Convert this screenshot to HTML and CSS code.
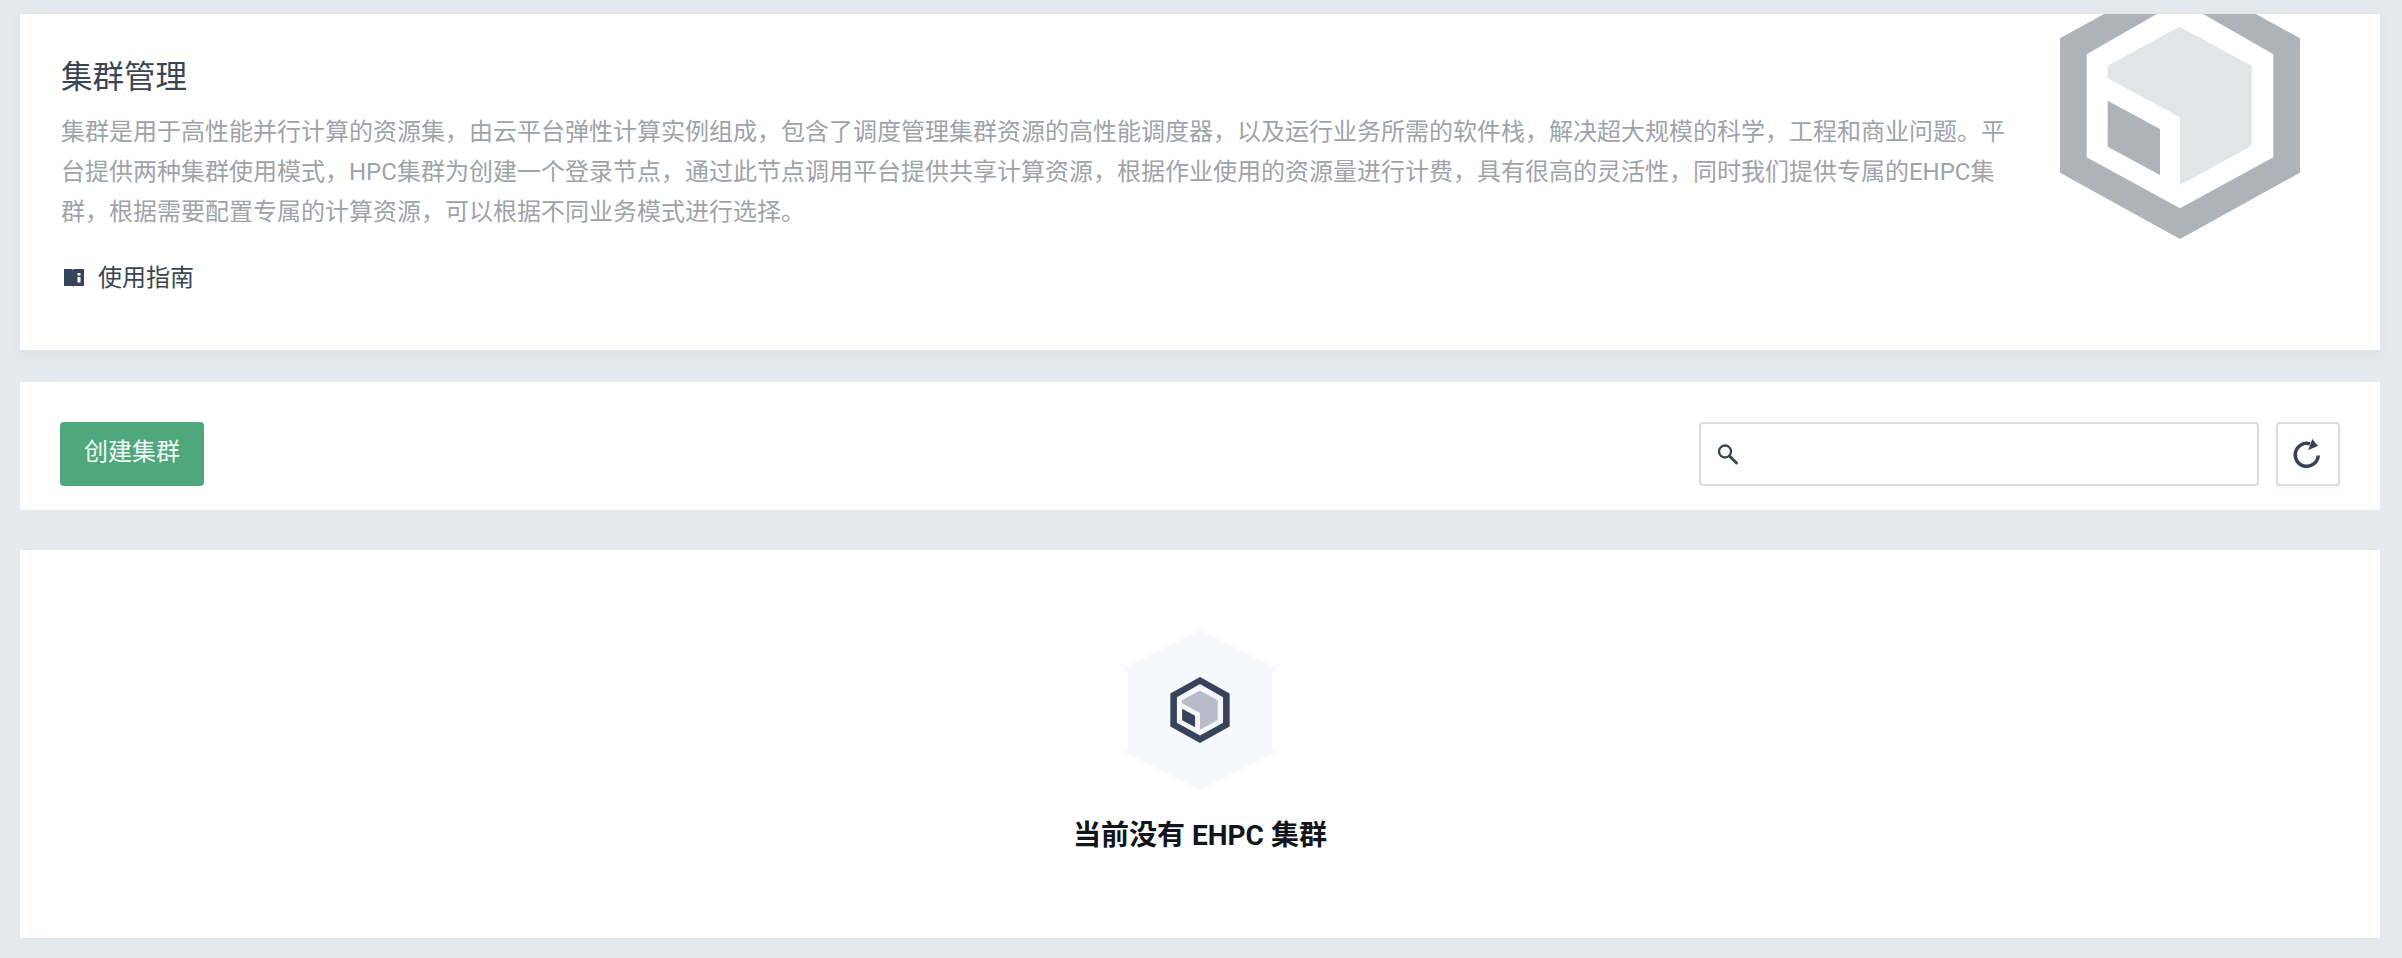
FILE: index.html
```html
<!DOCTYPE html>
<html lang="zh-CN">
<head>
<meta charset="utf-8">
<title>集群管理</title>
<link rel="stylesheet" href="styles.css">
</head>
<body>
<svg class="defs" width="0" height="0" aria-hidden="true">
  <symbol id="cube" viewBox="240 -84 720 801">
    <path class="hex" fill-rule="evenodd" d="M600 -84 960 115V518L600 717 240 518V115ZM600 2 320 163V472L600 625 880 472V163Z"/>
    <path class="top" d="M598 80 815 197V437L600 555V352L383 235V197Z"/>
    <path class="hex" d="M383 302 540 387V525L383 440Z"/>
  </symbol>
</svg>
<main class="page">
  <section class="card intro">
    <div class="intro-text">
      <h1 class="title">集群管理</h1>
      <p class="desc">集群是用于高性能并行计算的资源集，由云平台弹性计算实例组成，包含了调度管理集群资源的高性能调度器，以及运行业务所需的软件栈，解决超大规模的科学，工程和商业问题。平台提供两种集群使用模式，HPC集群为创建一个登录节点，通过此节点调用平台提供共享计算资源，根据作业使用的资源量进行计费，具有很高的灵活性，同时我们提供专属的EHPC集群，根据需要配置专属的计算资源，可以根据不同业务模式进行选择。</p>
      <a class="guide">
        <svg class="book" viewBox="0 0 20 18"><path d="M0 0 H8 L9 1 L10 0 H20 V17 H10 L9.500 18 L9 17 H0Z"/><path class="book-i" d="M13.500 4h3v2.500h-3zM13.500 8h3v5.500h-3z"/></svg>
        <span>使用指南</span>
      </a>
    </div>
    <svg class="logo-big"><use href="#cube"/></svg>
  </section>
  <section class="card toolbar">
    <button class="create">创建集群</button>
    <div class="tools">
      <label class="search">
        <svg class="search-icon" viewBox="0 0 24 24"><circle cx="9" cy="9.500" r="6" /><path d="M13.500 14 20.500 21"/></svg>
        <input class="search-input" type="text" aria-label="搜索">
      </label>
      <button class="refresh" aria-label="刷新">
        <svg viewBox="0 0 32 32"><path class="arc" d="M18 5.800A11.500 11.500 0 1 0 26.200 17.500"/><path class="arrow" d="M20.300 1 26 8 16.300 12Z"/></svg>
      </button>
    </div>
  </section>
  <section class="card empty">
    <div class="empty-badge">
      <svg class="badge-bg" viewBox="0 0 154 160"><path d="M77 0 154 38.500 149 42V118L154 121.500 77 160 0 121.500 5 118V42L0 38.500Z"/></svg>
      <svg class="logo-small"><use href="#cube"/></svg>
    </div>
    <h2 class="empty-title">当前没有 EHPC 集群</h2>
  </section>
</main>
</body>
</html>
```
FILE: styles.css
```css
* { box-sizing: border-box; }
html, body { margin: 0; height: 100%; }
body {
  background: #e5eaee;
  font-family: Roboto, "Noto Sans CJK SC", sans-serif;
  color: #36435a;
  overflow: hidden;
}
.defs { position: absolute; }
.page {
  padding: 14px 22px 0 20px;
  display: flex;
  flex-direction: column;
}
.card { background: #fff; }
.intro {
  height: 336px;
  padding: 40px 40px 0 41px;
  display: flex;
  justify-content: space-between;
  position: relative;
  overflow: hidden;
  box-shadow: 0 4px 16px rgba(54, 67, 80, .06);
}
.intro-text { width: 1950px; }
.title {
  margin: 0 0 10px;
  font-size: 31.5px;
  font-weight: 400;
  line-height: 48px;
  color: #3a4553;
}
.desc {
  margin: 0;
  font-size: 24px;
  line-height: 40px;
  color: #9ea3aa;
}
.guide {
  margin-top: 26px;
  display: flex;
  align-items: center;
  font-size: 24px;
  line-height: 40px;
  color: #3a4553;
}
.book { width: 20px; height: 18px; margin: 0 14px 0 3px; fill: #36435a; }
.book-i { fill: #fff; }
.logo-big { position: absolute; left: 2040px; top: -42px; width: 240px; height: 267px; --hex: #aeb3ba; --top: #e2e5e8; }
.hex { fill: var(--hex); }
.top { fill: var(--top); }
.toolbar {
  margin-top: 32px;
  height: 128px;
  padding: 40px 40px 0;
  display: flex;
  justify-content: space-between;
}
.create {
  width: 144px;
  height: 64px;
  border: 0;
  border-radius: 4px;
  background: #4fa87c;
  color: #f4faf7;
  font: 24px/60px Roboto, "Noto Sans CJK SC", sans-serif;
  padding: 0 0 4px;
}
.tools { display: flex; gap: 17px; }
.search {
  width: 560px;
  height: 64px;
  border: 2px solid #d7dce2;
  border-radius: 4px;
  display: flex;
  align-items: center;
  padding-left: 15px;
  background: #fff;
}
.search-icon { width: 24px; height: 24px; fill: none; stroke: #3a4553; stroke-width: 2.3; }
.search-icon path { stroke-width: 3; stroke-linecap: round; }
.search-input { flex: 1; min-width: 0; border: 0; outline: 0; background: transparent; }
.refresh {
  width: 64px;
  height: 64px;
  padding: 0;
  border: 2px solid #d7dce2;
  border-radius: 4px;
  background: #fff;
  display: flex;
  align-items: center;
  justify-content: center;
  box-shadow: 0 2px 4px rgba(54, 67, 80, .05);
}
.refresh svg { width: 32px; height: 32px; }
.arc { fill: none; stroke: #36435a; stroke-width: 3.6; }
.arrow { fill: #36435a; }
.empty {
  margin-top: 40px;
  height: 388px;
  padding-top: 80px;
  display: flex;
  flex-direction: column;
  align-items: center;
  box-shadow: 0 2px 8px rgba(54, 67, 80, .02);
}
.empty-badge {
  position: relative;
  width: 154px;
  height: 160px;
  display: flex;
  align-items: center;
  justify-content: center;
}
.badge-bg { position: absolute; inset: 0; fill: #f5f7fa; }
.logo-small { position: relative; width: 60px; height: 66px; --hex: #36435a; --top: #b6bdc8; }
.empty-title {
  margin: 26px 0 0;
  font-size: 28px;
  line-height: 40px;
  font-weight: 700;
  color: #12151a;
}
```
